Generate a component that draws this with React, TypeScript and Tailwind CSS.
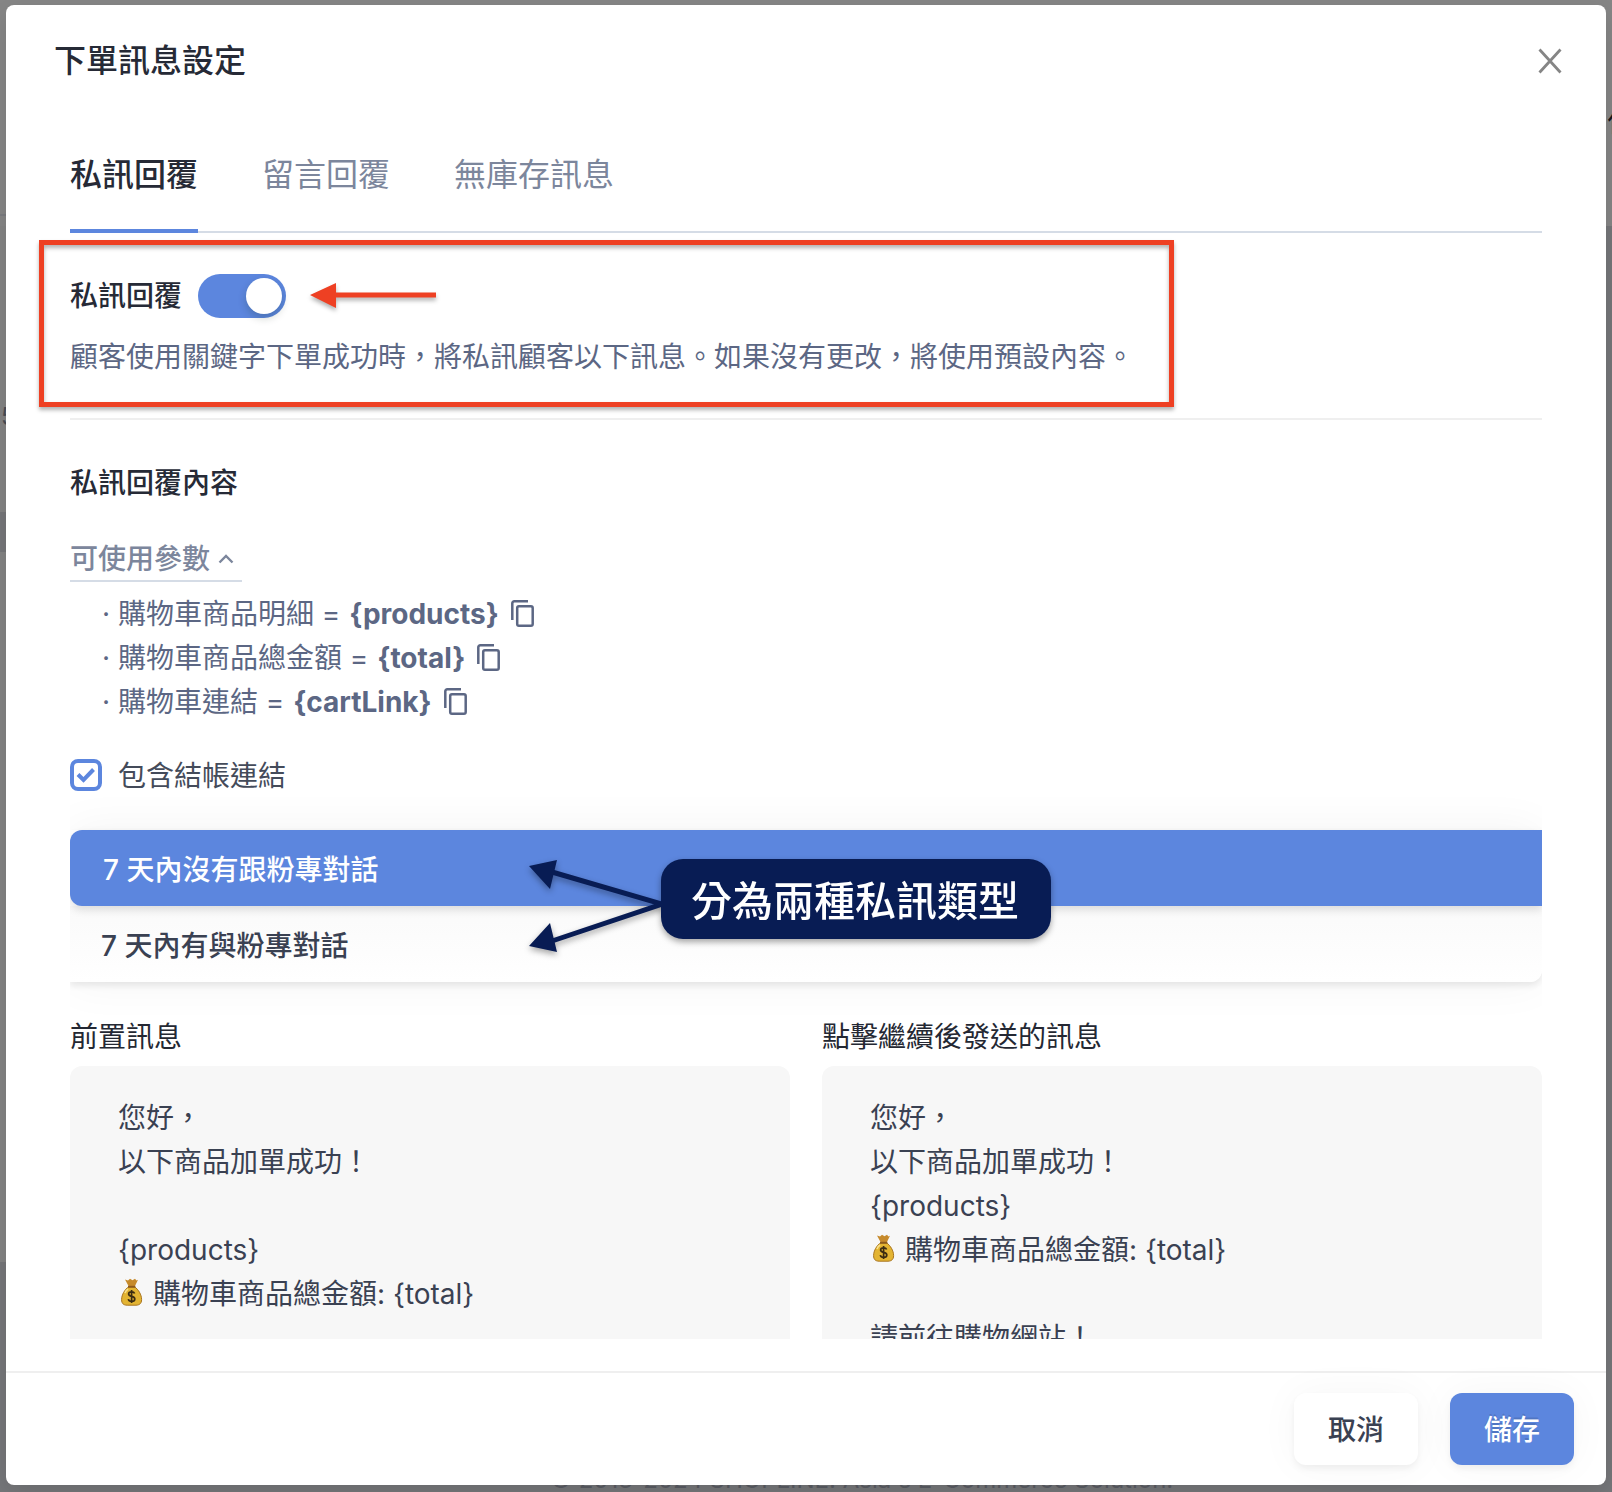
import React, { useState } from "react";

const tabs = ["私訊回覆", "留言回覆", "無庫存訊息"];

const params = [
  { label: "購物車商品明細", token: "{products}" },
  { label: "購物車商品總金額", token: "{total}" },
  { label: "購物車連結", token: "{cartLink}" },
];

function CloseIcon() {
  return (
    <svg width="24" height="26" viewBox="0 0 24 26" fill="none" stroke="#858585" strokeWidth="2.8" aria-hidden="true">
      <path d="M1.500 1.500L22.500 24.500M22.500 1.500L1.500 24.500" />
    </svg>
  );
}

function CopyIcon() {
  return (
    <svg width="23" height="28" viewBox="0 0 23 28" fill="none" stroke="#5c6784" strokeWidth="2.500" aria-hidden="true">
      <path d="M1.300 20V3.300a2 2 0 0 1 2-2H17" />
      <rect x="6.200" y="6.300" width="15.500" height="19.500" rx="1.800" />
    </svg>
  );
}

function MoneyBag() {
  return (
    <svg className="mr-2 inline-block align-[-2px]" width="27" height="28" viewBox="0 0 27 28" role="img" aria-label="💰">
      <path d="M7 1.500l3 1 2-1.800 2.500 1.600L17 .8l1.500 1.600 1.500-.6-3.600 7.400h-5.200z" fill="#c68a2c" />
      <path d="M10.800 8.600h5.600c4 3 7.200 8 7.200 13 0 4-2.400 5.600-5.600 5.600H9.200c-3.600 0-5.600-1.600-5.600-5.600 0-5 3.200-10 7.200-13z" fill="#e3b432" stroke="#a9741e" strokeWidth="1" />
      <path d="M10 7.800h7.400v2H10z" fill="#8d5a1c" />
      <path d="M7 15c.6-1.800 1.600-3 3-4" stroke="#f8e08a" strokeWidth="1.600" fill="none" />
      <path d="M16.600 15.600c-.4-1.200-1.500-1.800-3-1.800-1.800 0-3 .8-3 2.200 0 3.200 6.200 1.600 6.200 4.900 0 1.500-1.300 2.400-3.200 2.400-1.800 0-3-.8-3.300-2.200M13.600 12v13" stroke="#3b2c12" strokeWidth="1.700" fill="none" />
    </svg>
  );
}

function MessagePanel({ title, children }: { title: string; children: React.ReactNode }) {
  return (
    <section className="min-w-0 flex-1">
      <h3 className="leading-[46px] text-[#242833]">{title}</h3>
      <div className="mt-1.5 min-h-[400px] rounded-xl bg-[#f7f7f7] px-12 pt-[30px] leading-[44px] text-[#3a4152]">{children}</div>
    </section>
  );
}

export default function App() {
  const [tab, setTab] = useState(0);
  const [enabled, setEnabled] = useState(true);
  const [withLink, setWithLink] = useState(true);
  const [kind, setKind] = useState(0);

  return (
    <div className="relative h-screen overflow-hidden bg-[#76777a] p-[6px] pt-[5px] pb-[7px] font-[Inter,'Noto_Sans_CJK_TC',sans-serif] text-[28px]">
      <div className="absolute inset-x-0 top-0 h-[226px] bg-[#868686]" />
      <div className="absolute left-0 top-[226px] h-[286px] w-[6px] bg-[#848484]" />
      <div className="absolute left-0 top-[552px] h-[710px] w-[6px] bg-[#848484]" />
      <div className="absolute left-0 top-[214px] h-[2px] w-[6px] bg-[#7b7c80]" />
      <p className="absolute left-px top-[401px] text-2xl leading-8 text-[#4a4d55]">5</p>
      <p className="absolute left-[1607px] top-[104px] leading-9 whitespace-nowrap text-[#15171c]">什</p>
      <p className="absolute inset-x-0 bottom-0 pl-[550px] text-2xl leading-6 text-[#5a5c63]">
        © 2013-2024 SHOPLINE. Asia&apos;s E-Commerce Solution.
      </p>

      <div role="dialog" aria-labelledby="dialog-title" className="relative flex h-full flex-col rounded-lg bg-white shadow-[0_8px_24px_rgba(0,0,0,0.12)]">
        <header className="flex items-center justify-between pt-7 pr-11 pl-12">
          <h1 id="dialog-title" className="text-[32px] leading-[56px] font-medium text-[#262a36]">下單訊息設定</h1>
          <button type="button" aria-label="關閉">
            <CloseIcon />
          </button>
        </header>

        <main className="mx-16 mb-8 min-h-0 flex-1 overflow-hidden pt-8">
          <div role="tablist" className="flex gap-16 border-b-2 border-[#d5dce6] text-[32px]">
            {tabs.map((name, i) => (
              <button
                key={name}
                type="button"
                role="tab"
                aria-selected={tab === i}
                onClick={() => setTab(i)}
                className={
                  tab === i
                    ? "-mb-[2px] border-b-4 border-[#5c86de] pt-[30px] pb-[30px] leading-[48px] font-medium text-[#262a36]"
                    : "pt-[30px] pb-8 leading-[48px] text-[#7c869c]"
                }
              >
                {name}
              </button>
            ))}
          </div>

          <section className="border-b-2 border-[#efefef] pt-[39px] pb-[39px]">
            <div className="flex items-center gap-4">
              <label htmlFor="reply-switch" className="leading-[48px] font-medium text-[#262a36]">私訊回覆</label>
              <span className="relative inline-flex h-11 w-[88px] rounded-full bg-[#5c86de]">
                <input
                  id="reply-switch"
                  type="checkbox"
                  role="switch"
                  checked={enabled}
                  onChange={() => setEnabled(!enabled)}
                  className="peer absolute inset-0 z-10 opacity-0"
                />
                <span className="m-1 size-9 rounded-full bg-white shadow-[0_4px_8px_rgba(0,35,11,0.2)] peer-checked:ml-12" />
              </span>
              <svg className="ml-2 drop-shadow-[0_3px_2px_rgba(0,0,0,0.3)]" width="128" height="26" viewBox="0 0 128 26" aria-hidden="true">
                <path d="M0 12L26 0V9.500H126V14.500H26V25z" fill="#ee4023" />
              </svg>
            </div>
            <p className="mt-[15px] leading-[44px] text-[#5c6784]">
              顧客使用關鍵字下單成功時，將私訊顧客以下訊息。如果沒有更改，將使用預設內容。
            </p>
          </section>

          <h2 className="mt-10 leading-[46px] font-medium text-[#262a36]">私訊回覆內容</h2>

          <button type="button" aria-expanded="true" className="mt-[30px] flex items-center border-b-2 border-[#d5dce6] pt-0.5 pr-2 leading-[42px] font-medium text-[#7c869c]">
            可使用參數
            <svg className="ml-2" width="16" height="10" viewBox="0 0 16 10" fill="none" stroke="#7c869c" strokeWidth="2.400" aria-hidden="true">
              <path d="M1.500 8.500L8 2l6.500 6.500" />
            </svg>
          </button>

          <ul className="mt-2.5 pl-8 leading-[44px] text-[#5c6784]">
            {params.map((p) => (
              <li key={p.token} className="flex items-center whitespace-pre">
                <span>· {p.label} = </span>
                <strong className="ml-px font-bold">{p.token}</strong>
                <button type="button" aria-label={`複製 ${p.token}`} className="ml-3">
                  <CopyIcon />
                </button>
              </li>
            ))}
          </ul>

          <label className="mt-[27px] flex items-center gap-4 text-[#444b5a]">
            <span className="relative inline-flex size-8">
              <input
                type="checkbox"
                checked={withLink}
                onChange={() => setWithLink(!withLink)}
                className="peer size-8 appearance-none rounded-lg border-4 border-[#5c86de] bg-white"
              />
              <svg className="pointer-events-none invisible absolute inset-0 peer-checked:visible" viewBox="0 0 32 32" fill="none" stroke="#5c86de" strokeWidth="4" aria-hidden="true">
                <path d="M8 15.500L13.500 21L23.500 10.500" />
              </svg>
            </span>
            <span className="pt-0.5 leading-[46px]">包含結帳連結</span>
          </label>

          <div className="relative mt-[31px]">
            <div role="tablist" className="flex flex-col rounded-r-xl shadow-[0_4px_6px_rgba(0,0,0,0.08),0_0_48px_rgba(0,0,0,0.05)]">
              <button
                type="button"
                role="tab"
                aria-selected={kind === 0}
                onClick={() => setKind(0)}
                className="relative rounded-l-xl bg-[#5c86de] px-[33px] pt-1 text-left leading-[72px] font-medium text-white shadow-[0_4px_8px_rgba(0,0,0,0.12)]"
              >
                7 天內沒有跟粉專對話
              </button>
              <button
                type="button"
                role="tab"
                aria-selected={kind === 1}
                onClick={() => setKind(1)}
                className="rounded-br-xl bg-linear-to-b from-[#fafafa] to-white px-[31px] pt-1 text-left leading-[72px] font-medium text-[#3a4152]"
              >
                7 天內有與粉專對話
              </button>
            </div>

            <div className="absolute left-[458px] top-[29px] flex drop-shadow-[0_3px_3px_rgba(0,0,0,0.35)]">
              <svg width="134" height="94" viewBox="0 0 134 94" fill="#081c54" stroke="#081c54" aria-hidden="true">
                <path d="M134 45L24 13M134 45L24 82" strokeWidth="5" />
                <path d="M1 7L29 1L22 30zM1 87L22 64L29 93z" stroke="none" />
              </svg>
              <p className="-ml-px h-20 rounded-[22px] bg-[#081c54] pt-1 pr-8 pl-[30px] text-[41px] leading-[76px] font-medium whitespace-nowrap text-white">
                分為兩種私訊類型
              </p>
            </div>
          </div>

          <div className="mt-8 flex gap-8">
            <MessagePanel title="前置訊息">
              <p>您好，</p>
              <p>以下商品加單成功！</p>
              <br />
              <p>{"{products}"}</p>
              <p>
                <MoneyBag />
                購物車商品總金額: {"{total}"}
              </p>
            </MessagePanel>
            <MessagePanel title="點擊繼續後發送的訊息">
              <p>您好，</p>
              <p>以下商品加單成功！</p>
              <p>{"{products}"}</p>
              <p>
                <MoneyBag />
                購物車商品總金額: {"{total}"}
              </p>
              <br />
              <p>請前往購物網站！</p>
            </MessagePanel>
          </div>
        </main>

        <div className="pointer-events-none absolute top-[235px] left-[33px] h-[167px] w-[1135px] border-[5px] border-[#ee4023] shadow-[0_3px_4px_rgba(0,0,0,0.3),inset_0_3px_4px_rgba(0,0,0,0.3)]" />

        <footer className="flex justify-end gap-8 border-t-2 border-[#efefef] px-8 py-5">
          <button type="button" className="rounded-xl bg-white px-[34px] pt-0.5 leading-[70px] font-medium text-[#3a4152] shadow-[0_4px_6px_rgba(0,0,0,0.05),0_0_40px_rgba(0,0,0,0.04)]">
            取消
          </button>
          <button type="button" className="rounded-xl bg-[#5c86de] px-[34px] pt-0.5 leading-[70px] font-medium text-white shadow-[0_4px_6px_rgba(0,0,0,0.05),0_0_40px_rgba(0,0,0,0.04)] text-shadow-[0_-2px_0_rgba(0,0,0,0.12)]">
            儲存
          </button>
        </footer>
      </div>
    </div>
  );
}
